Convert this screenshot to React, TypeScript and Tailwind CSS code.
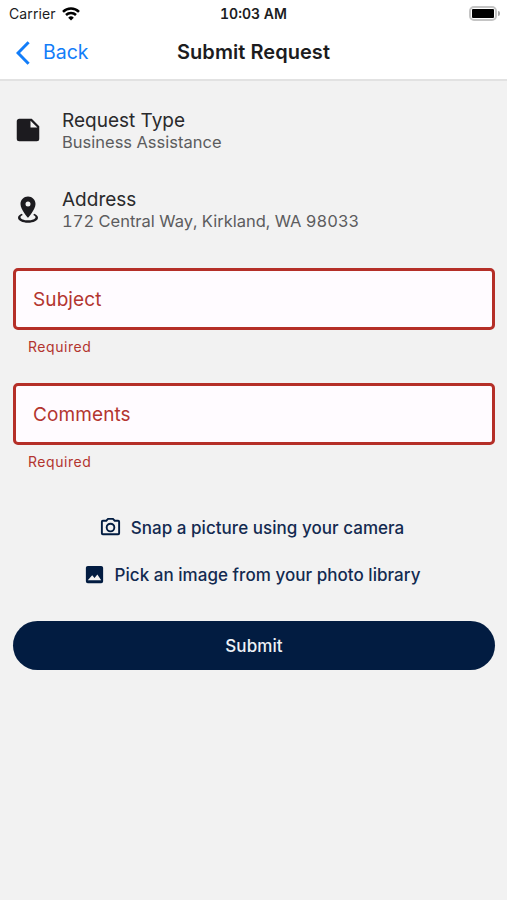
function MdiIcon({ d, className }: { d: string; className?: string }) {
  return (
    <svg viewBox="0 0 24 24" fill="currentColor" className={className} aria-hidden="true">
      <path d={d} />
    </svg>
  );
}

const icons = {
  note: "M14,10V4.5L19.5,10M5,3C3.89,3 3,3.89 3,5V19A2,2 0 0,0 5,21H19A2,2 0 0,0 21,19V9L15,3H5Z",
  marker:
    "M12,2C15.31,2 18,4.66 18,7.95C18,12.41 12,19 12,19C12,19 6,12.41 6,7.95C6,4.66 8.69,2 12,2M12,6A2,2 0 0,0 10,8A2,2 0 0,0 12,10A2,2 0 0,0 14,8A2,2 0 0,0 12,6M20,19C20,21.21 16.42,23 12,23C7.58,23 4,21.21 4,19C4,17.71 5.22,16.56 7.11,15.83L7.75,16.74C6.67,17.19 6,17.81 6,18.5C6,19.88 8.69,21 12,21C15.31,21 18,19.88 18,18.5C18,17.81 17.33,17.19 16.25,16.74L16.89,15.83C18.78,16.56 20,17.71 20,19Z",
  camera:
    "M20,4H16.83L15,2H9L7.17,4H4A2,2 0 0,0 2,6V18A2,2 0 0,0 4,20H20A2,2 0 0,0 22,18V6A2,2 0 0,0 20,4M20,18H4V6H8.05L9.88,4H14.12L15.95,6H20V18M12,7A5,5 0 0,0 7,12A5,5 0 0,0 12,17A5,5 0 0,0 17,12A5,5 0 0,0 12,7M12,15A3,3 0 0,1 9,12A3,3 0 0,1 12,9A3,3 0 0,1 15,12A3,3 0 0,1 12,15Z",
  image:
    "M9.6,12.8L12,15.6L15,12L19,18H5M21,19V5C21,3.89 20.1,3 19,3H5A2,2 0 0,0 3,5V19A2,2 0 0,0 5,21H19A2,2 0 0,0 21,19Z",
};

function StatusBar() {
  return (
    <div className="grid h-[27px] grid-cols-3 items-center pl-[9px] pr-[7px] text-[14px] text-[#1c1c1e]">
      <div className="flex items-center gap-[6px]">
        <span className="tracking-[0.1px]">Carrier</span>
        <svg viewBox="0 0 18 14" className="h-[14px] w-[18px]" fill="none" stroke="#000" strokeWidth="2.5" aria-hidden="true">
          <path d="M1 4.9A11.4 11.4 0 0 1 17 4.9" />
          <path d="M4 8A7.2 7.2 0 0 1 14 8" />
          <path d="M9 13.6L6.2 10.7A4 4 0 0 1 11.8 10.7Z" fill="#000" stroke="none" />
        </svg>
      </div>
      <span className="pr-[2px] text-center font-semibold tabular-nums">10:03 AM</span>
      <div className="flex items-center justify-end">
        <div className="h-[15px] w-[28px] rounded-[5px] border-2 border-[#c4c4c4] p-[1px]">
          <div className="h-full rounded-[1px] bg-black" />
        </div>
        <div className="ml-px h-[5px] w-[2px] rounded-r-full bg-[#a8a8a8]" />
      </div>
    </div>
  );
}

function Header() {
  return (
    <header className="border-b-2 border-[#e2e2e2] bg-white">
      <StatusBar />
      <div className="grid h-[52px] grid-cols-[1fr_auto_1fr] items-center pb-px">
        <button className="flex items-center pl-[16px] text-[19.5px] text-[#127df9]">
          <svg viewBox="0 0 14 24" className="mr-[13px] h-[24px] w-[14px]" fill="none" stroke="currentColor" strokeWidth="3" aria-hidden="true">
            <path d="M12.6 1.2L2 12L12.6 22.8" />
          </svg>
          Back
        </button>
        <h1 className="pb-[2px] text-[20px] font-semibold tracking-[0.05px] text-[#1c1c1e]">Submit Request</h1>
      </div>
    </header>
  );
}

function DetailRow({ icon, title, value }: { icon: string; title: string; value: string }) {
  return (
    <div className="flex items-center gap-[19px]">
      <MdiIcon d={icon} className="mb-[2px] size-[30px] text-[#1c1b1f]" />
      <div>
        <div className="text-[19px] leading-[23px] text-[#2a2a2c]">{title}</div>
        <div className="text-[16.5px] leading-[21px] tabular-nums text-[#5c5c5e]">{value}</div>
      </div>
    </div>
  );
}

function RequiredField({ label }: { label: string }) {
  return (
    <div className="text-[#b3352f]">
      <div className="flex h-[62px] items-center rounded-[5px] border-3 border-[#b52f28] bg-[#fffbff] pl-[17px] pt-[2px] text-[19px] tracking-[0.1px]">
        {label}
      </div>
      <p className="pl-[15px] pt-[6px] text-[14px] leading-[22px] tracking-[0.55px]">Required</p>
    </div>
  );
}

function PhotoButton({ icon, label }: { icon: string; label: string }) {
  return (
    <button className="flex h-[47px] items-center justify-center gap-[9px] pr-[5px] text-[17px] font-medium tracking-[0.04px] text-[#132a50]">
      <MdiIcon d={icon} className="size-[23px] text-[#021c41]" />
      <span className="pt-[2px]">{label}</span>
    </button>
  );
}

export default function App() {
  return (
    <div className="min-h-screen bg-[#f2f2f2] font-['Inter',sans-serif]">
      <Header />
      <main className="flex flex-col pl-[13px] pr-[12px] pt-[28px]">
        <div className="flex flex-col gap-[35px]">
          <DetailRow icon={icons.note} title="Request Type" value="Business Assistance" />
          <DetailRow icon={icons.marker} title="Address" value="172 Central Way, Kirkland, WA 98033" />
        </div>
        <div className="mt-[36px] flex flex-col gap-[25px]">
          <RequiredField label="Subject" />
          <RequiredField label="Comments" />
        </div>
        <div className="mt-[31px] flex flex-col">
          <PhotoButton icon={icons.camera} label="Snap a picture using your camera" />
          <PhotoButton icon={icons.image} label="Pick an image from your photo library" />
        </div>
        <button className="mt-[23px] h-[49px] rounded-full bg-[#021c41] pt-[2px] text-[17px] font-medium tracking-[0.1px] text-[#eef1f6]">
          Submit
        </button>
      </main>
    </div>
  );
}
